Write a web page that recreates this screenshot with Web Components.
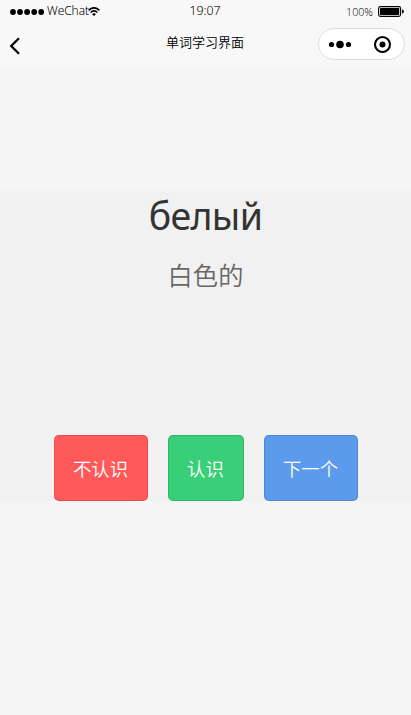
<!DOCTYPE html>
<html lang="zh">
<head>
<meta charset="utf-8">
<title>单词学习界面</title>
<style>
html,body{margin:0;height:100%}
body{background:#f5f5f5;overflow:hidden;font-family:"Open Sans","Noto Sans CJK SC",sans-serif}
</style>
</head>
<body>
<study-page></study-page>
<script>
class Base extends HTMLElement{
  connectedCallback(){
    if(this.shadowRoot)return;
    this.attachShadow({mode:'open'}).innerHTML=this.constructor.markup;
  }
}
class StatusBar extends Base{
  static markup=`<style>
  :host{display:grid;grid-template-columns:1fr auto 1fr;height:23px;line-height:22px;font-size:12px;color:#000;padding:0 7px 0 10px;font-weight:300}
  .l,.r{display:flex;align-items:center}
  .r{justify-content:flex-end;font-size:10.7px;padding-top:2px;height:20px}
  svg{display:block;flex:none}
  .n{margin:-1px 0 0 3px;width:41px;white-space:nowrap;font-size:12px;letter-spacing:-.05px;-webkit-text-stroke:.1px #000}
  .t{font-size:12.3px;margin-right:4px;-webkit-text-stroke:.1px #000}
  .b{margin-left:5px;margin-top:-1px}
  </style>
  <div class="l"><svg width="34" height="6"><g fill="#000"><circle cx="3" cy="3" r="2.9"/><circle cx="10" cy="3" r="2.9"/><circle cx="17.1" cy="3" r="2.9"/><circle cx="24.2" cy="3" r="2.9"/><circle cx="31.2" cy="3" r="2.9"/></g></svg><span class="n">WeChat</span><svg width="12" height="9" viewBox="0 0 12 9" fill="none" stroke="#000" stroke-width="1.6"><path d="M.6 3.3Q6-1.7 11.4 3.3M2.6 5.5Q6 2.3 9.4 5.5"/><path d="M4 7Q6 5.4 8 7L6 9Z" fill="#000" stroke="none"/></svg></div>
  <div class="t">19:07</div>
  <div class="r"><span>100%</span><svg class="b" width="26" height="11" viewBox="0 0 26 11"><rect x=".6" y=".6" width="22" height="9.8" rx="1.8" fill="none" stroke="#000" stroke-width="1.1"/><rect x="2" y="2" width="19.2" height="7" rx=".6"/><path d="M24 3.4Q26 4 26 5.5T24 7.6Z"/></svg></div>`;
}
class CapsuleMenu extends Base{
  static markup=`<style>:host{display:flex;box-sizing:border-box;width:87px;height:32px;border:1px solid #dcdcdc;border-radius:16px;background:#fff}svg{display:block}</style>
  <svg width="85" height="30" viewBox="0 0 85 30"><circle cx="12.5" cy="15.5" r="2.6"/><circle cx="21" cy="15.5" r="3.8"/><circle cx="29.5" cy="15.5" r="2.6"/><circle cx="63.5" cy="15.5" r="7.5" fill="none" stroke="#000" stroke-width="2.1"/><circle cx="63.5" cy="15.5" r="3"/></svg>`;
}
class NavBar extends Base{
  static markup=`<style>
  :host{display:grid;grid-template-columns:1fr auto 1fr;height:45px;padding:0 6px 0 9px}
  .back{margin-top:13px;display:block}
  .title{font-size:13px;line-height:20px;margin:9px 4px 0 0;color:#000;font-family:"Noto Sans CJK SC",sans-serif;font-weight:350}
  capsule-menu{justify-self:end;margin-top:5px}
  </style>
  <svg class="back" width="12" height="20" viewBox="0 0 12 20"><path d="M10 2.2L2.2 10L10 17.8" fill="none" stroke="#000" stroke-width="2.3"/></svg>
  <div class="title"><slot></slot></div><capsule-menu></capsule-menu>`;
}
class WordCard extends Base{
  static markup=`<style>
  :host{display:flex;flex-direction:column;justify-content:space-between;height:310px;background:#f1f1f1;text-align:center}
  .word{font-family:"Noto Sans",sans-serif;font-size:37.5px;letter-spacing:-.65px;line-height:50px;color:#333}
  .mean{font-family:"Noto Sans CJK SC",sans-serif;font-size:25.3px;line-height:34px;margin-top:16px;color:#666;font-weight:350}
  .acts{display:flex;justify-content:center;gap:20px}
  </style>
  <div><div class="word"><slot name="word"></slot></div><div class="mean"><slot name="meaning"></slot></div></div>
  <div class="acts"><slot></slot></div>`;
}
class ActionButton extends Base{
  static markup=`<style>
  :host{display:block;box-sizing:border-box;width:var(--w);height:66px;font-family:"Noto Sans CJK SC",sans-serif;font-size:18.4px;font-weight:350;line-height:66px;color:#fff;text-align:center;background:var(--c);border-radius:5px;box-shadow:inset 0 0 0 1px rgba(0,0,0,.12);white-space:nowrap}
  </style><slot></slot>`;
}
class StudyPage extends Base{
  static markup=`<style>
  :host{display:block;height:100%}
  header{background:#f8f8f8;height:68px}
  word-card{margin-top:123px}
  </style>
  <header><status-bar></status-bar><nav-bar>单词学习界面</nav-bar></header>
  <word-card><span slot="word">белый</span><span slot="meaning">白色的</span>
  <action-button style="--c:#ff5959;--w:94px">不认识</action-button><action-button style="--c:#39ce78;--w:76px">认识</action-button><action-button style="--c:#5c9aec;--w:94px">下一个</action-button></word-card>`;
}
customElements.define('status-bar',StatusBar);
customElements.define('capsule-menu',CapsuleMenu);
customElements.define('nav-bar',NavBar);
customElements.define('word-card',WordCard);
customElements.define('action-button',ActionButton);
customElements.define('study-page',StudyPage);
</script>
</body>
</html>
